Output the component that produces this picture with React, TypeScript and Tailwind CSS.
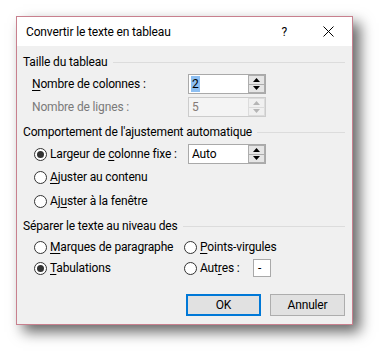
import type { ReactNode } from "react";

const font =
  "font-['Roboto',sans-serif] text-[12px] leading-none tracking-[-0.15px] text-black";

function U({ children }: { children: ReactNode }) {
  return <span className="underline decoration-1 underline-offset-[2px]">{children}</span>;
}

function Heading({ children }: { children: ReactNode }) {
  return (
    <div className="flex h-[20px] items-center pl-[6px] pr-[7px]">
      <span className="whitespace-nowrap">{children}</span>
      <div className="ml-[5px] h-px flex-1 bg-[#dcdcdc]" />
    </div>
  );
}

function Radio({ checked }: { checked?: boolean }) {
  return (
    <span className="flex h-[13px] w-[13px] shrink-0 items-center justify-center rounded-full border border-[#333333] bg-white">
      {checked && <span className="h-[7px] w-[7px] rounded-full bg-[#333333]" />}
    </span>
  );
}

function Arrow({ up, disabled }: { up?: boolean; disabled?: boolean }) {
  return (
    <svg width="7" height="4" viewBox="0 0 7 4">
      <path
        d={up ? "M3.5 0 L7 4 L0 4 Z" : "M0 0 L7 0 L3.5 4 Z"}
        fill={disabled ? "#b5b5b5" : "#000"}
      />
    </svg>
  );
}

function Spin({
  value,
  selected,
  disabled,
}: {
  value: string;
  selected?: boolean;
  disabled?: boolean;
}) {
  return (
    <div
      className={
        disabled
          ? "flex h-[20px] w-[78px] border border-[#cccccc] bg-[#f4f4f4]"
          : "flex h-[20px] w-[78px] border border-[#a9a9a9] bg-white"
      }
    >
      <div className="flex flex-1 items-center pl-[2px]">
        <span
          className={
            selected
              ? "bg-[#8dbff2] px-px py-[2px]"
              : disabled
                ? "px-px text-[#857a76]"
                : "px-px"
          }
        >
          {value}
        </span>
      </div>
      <div className="flex w-[17px] flex-col">
        <div
          className={
            disabled
              ? "flex flex-1 items-center justify-center border border-[#dcdcdc] bg-[#f0f0f0]"
              : "flex flex-1 items-center justify-center border border-[#adadad] bg-[#e5e5e5]"
          }
        >
          <Arrow up disabled={disabled} />
        </div>
        <div
          className={
            disabled
              ? "flex flex-1 items-center justify-center border border-t-0 border-[#dcdcdc] bg-[#f0f0f0]"
              : "flex flex-1 items-center justify-center border border-t-0 border-[#adadad] bg-[#e5e5e5]"
          }
        >
          <Arrow disabled={disabled} />
        </div>
      </div>
    </div>
  );
}

function Choice({ checked, children }: { checked?: boolean; children: ReactNode }) {
  return (
    <div className="flex items-center gap-[3px]">
      <Radio checked={checked} />
      <span className="whitespace-nowrap">{children}</span>
    </div>
  );
}

export default function App() {
  return (
    <div className={`h-[353px] w-[379px] bg-white pl-4 pt-4 ${font}`}>
      <div className="flex h-[309px] w-[337px] flex-col border border-[#c8808e] shadow-[7px_7px_13px_rgba(0,0,0,0.6)]">
        <div className="flex h-[29px] items-center bg-white pl-[9px]">
          <span className="flex-1">Convertir le texte en tableau</span>
          <span className="mr-[36px]">?</span>
          <svg className="mr-[18px]" width="11" height="11" viewBox="0 0 11 11">
            <path d="M0.5 0.5 L10.5 10.5 M10.5 0.5 L0.5 10.5" stroke="#000" strokeWidth="1" />
          </svg>
        </div>

        <div className="flex flex-1 flex-col bg-[#f0f0f0]">
          <div className="mt-[6px]">
            <Heading>Taille du tableau</Heading>
          </div>
          <div className="mt-[2px] flex h-[20px] items-center pl-[15px]">
            <span className="w-[156px]">
              <U>N</U>ombre de colonnes :
            </span>
            <Spin value="2" selected />
          </div>
          <div className="mt-[3px] flex h-[20px] items-center pl-[15px]">
            <span className="w-[156px] text-[#7a7a7a]">Nombre de lignes :</span>
            <Spin value="5" disabled />
          </div>

          <div className="mt-[5px]">
            <Heading>Comportement de l'ajustement automatique</Heading>
          </div>
          <div className="mt-[2px] flex h-[20px] items-center pl-[17px]">
            <div className="w-[154px]">
              <Choice checked>
                Largeur de <U>c</U>olonne fixe :
              </Choice>
            </div>
            <Spin value="Auto" />
          </div>
          <div className="mt-[3px] flex h-[20px] items-center pl-[17px]">
            <Choice>
              <U>A</U>juster au contenu
            </Choice>
          </div>
          <div className="mt-[4px] flex h-[20px] items-center pl-[17px]">
            <Choice>
              Aj<U>u</U>ster à la fenêtre
            </Choice>
          </div>

          <div className="mt-[5px]">
            <Heading>Séparer le texte au niveau des</Heading>
          </div>
          <div className="mt-px flex h-[20px] items-center pl-[17px]">
            <div className="w-[150px]">
              <Choice>
                <U>M</U>arques de paragraphe
              </Choice>
            </div>
            <Choice>
              <U>P</U>oints-virgules
            </Choice>
          </div>
          <div className="mt-px flex h-[20px] items-center pl-[17px]">
            <div className="w-[150px]">
              <Choice checked>
                <U>T</U>abulations
              </Choice>
            </div>
            <div className="w-[69px]">
              <Choice>
                Aut<U>r</U>es :
              </Choice>
            </div>
            <div className="flex h-[18px] w-[18px] items-center border border-[#a9a9a9] bg-white pl-[4px]">
              -
            </div>
          </div>

          <div className="mt-[16px] flex justify-end gap-[9px] pr-[7px]">
            <button className="flex h-[22px] w-[75px] items-center justify-center border-2 border-[#0078d7] bg-[#e1e1e1]">
              OK
            </button>
            <button className="flex h-[22px] w-[75px] items-center justify-center border border-[#adadad] bg-[#e1e1e1]">
              Annuler
            </button>
          </div>
        </div>
      </div>
    </div>
  );
}
